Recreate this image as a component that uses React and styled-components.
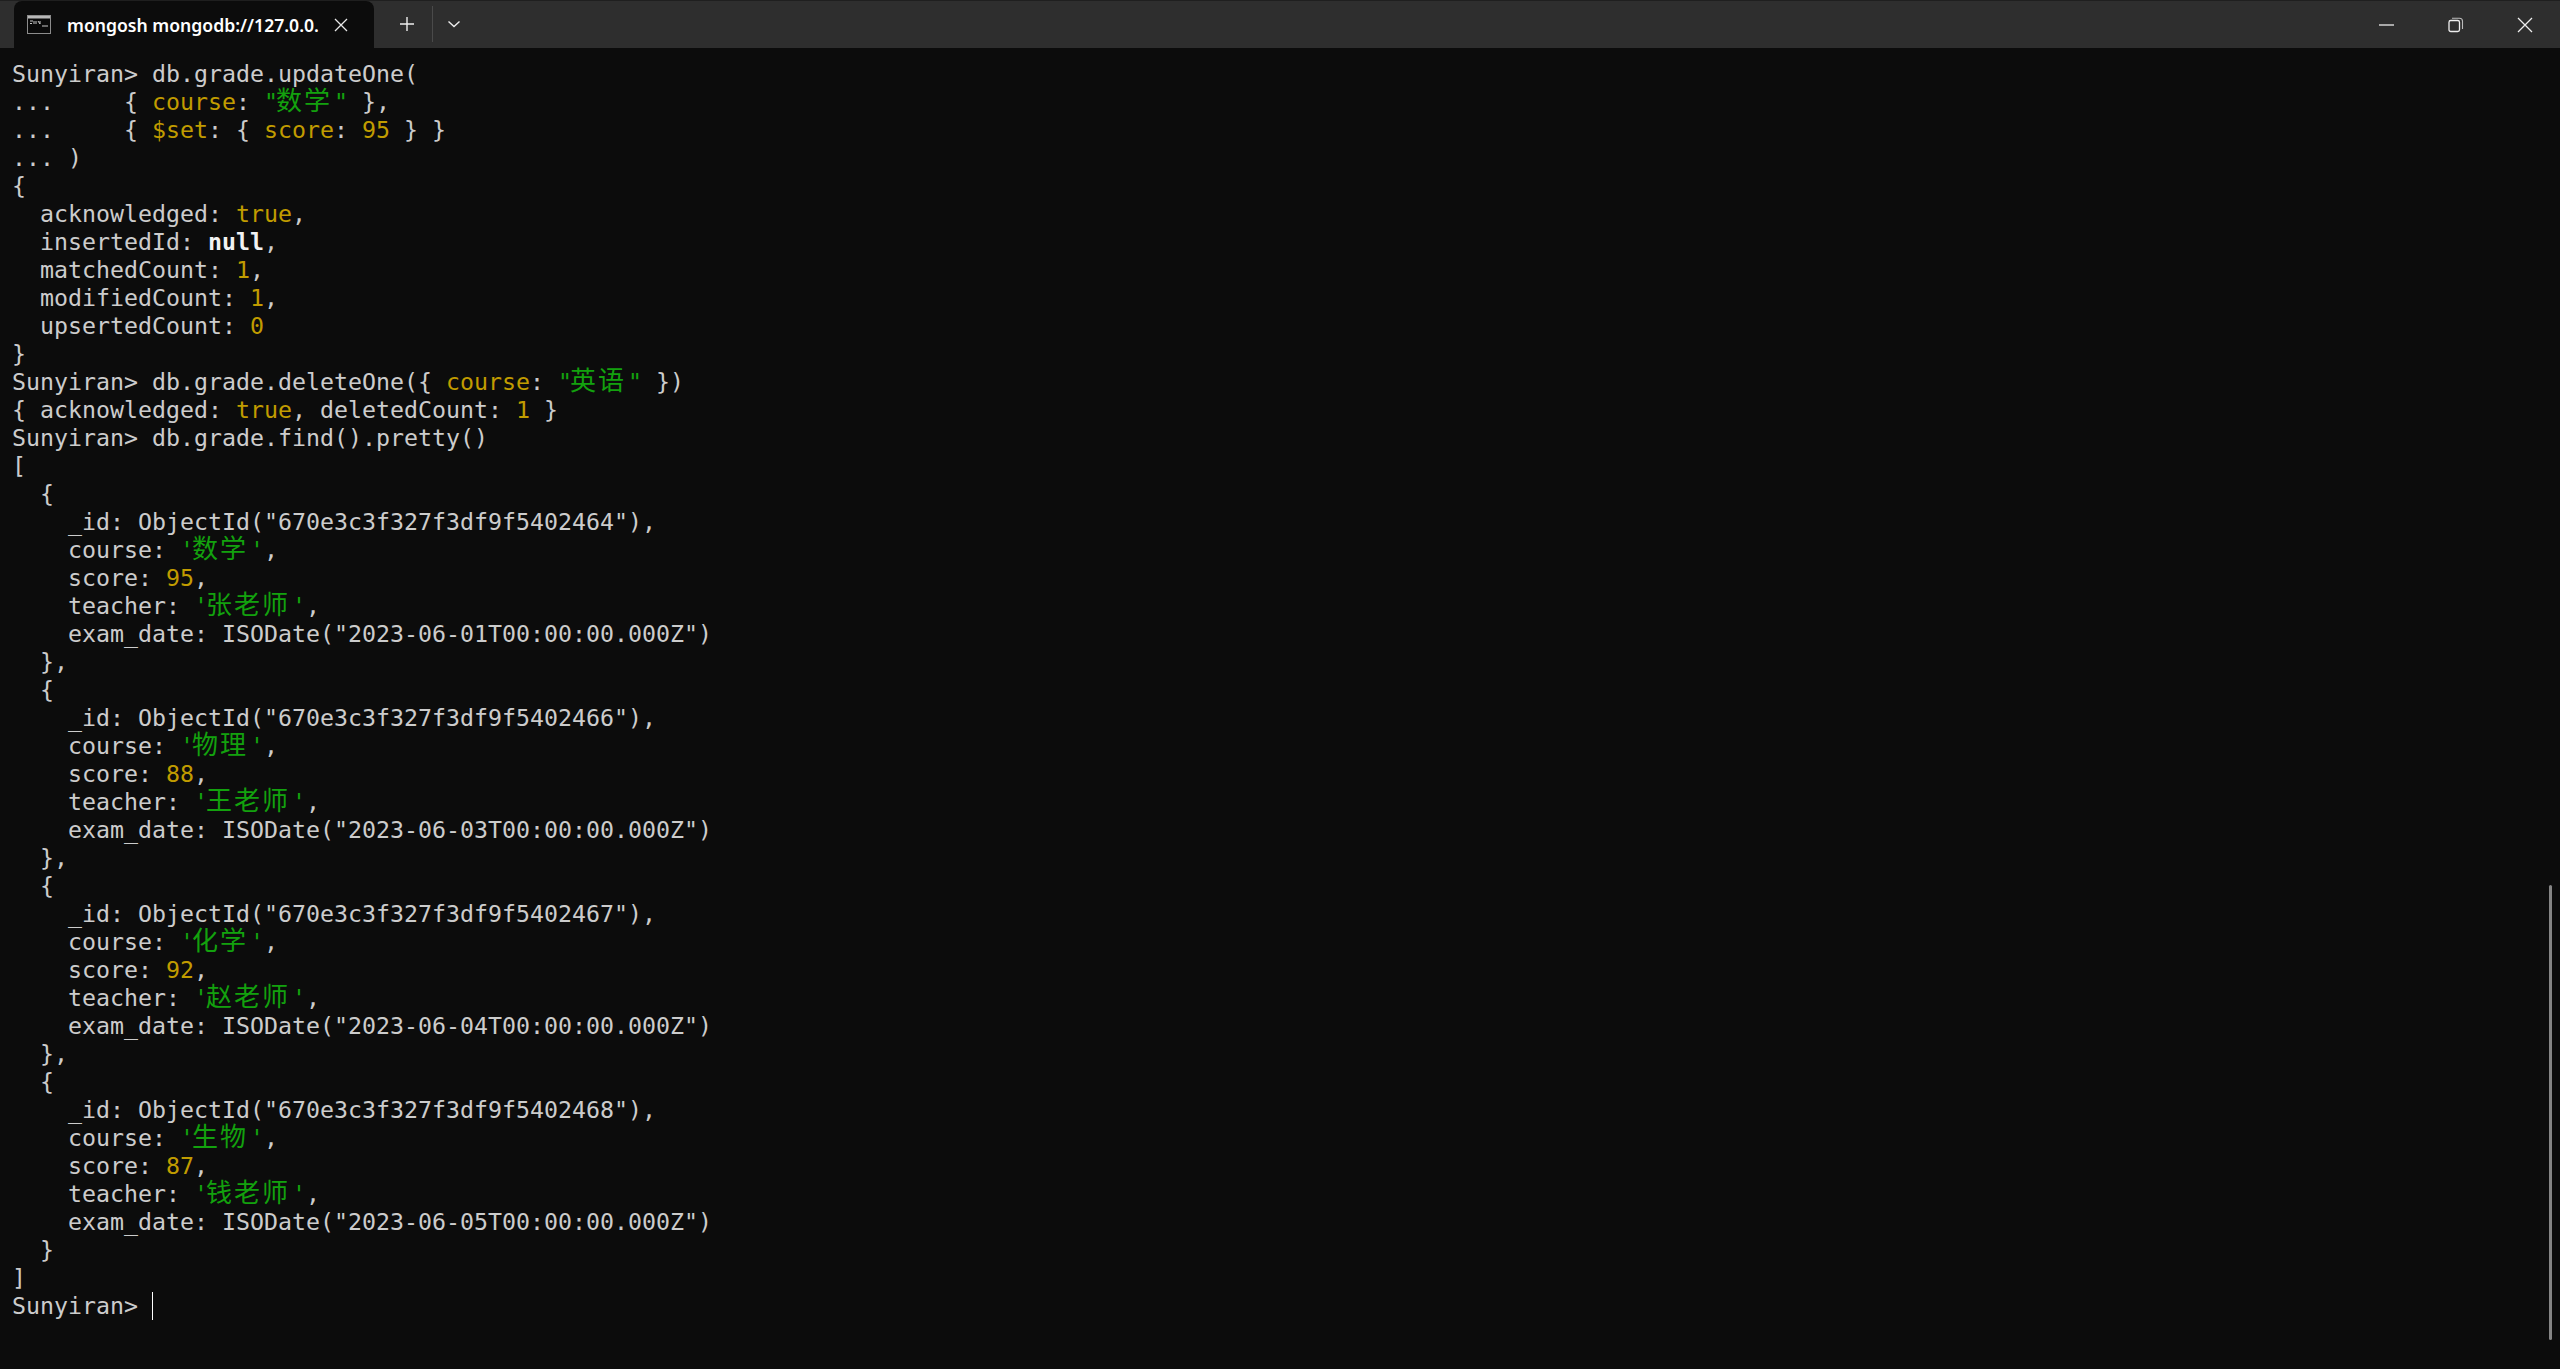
import React from "react";
import styled, { createGlobalStyle } from "styled-components";

const Global = createGlobalStyle`
  html, body { margin: 0; padding: 0; background: #0c0c0c; }
  #root { height: 100vh; }
`;

const Window = styled.div`
  position: relative;
  height: 1369px;
  background: #0c0c0c;
  display: flex;
  flex-direction: column;
  overflow: hidden;
`;

const TitleBar = styled.header`
  height: 48px;
  flex: none;
  background: #2e2e2e;
  border-top: 1px solid #1f1f1f;
  box-sizing: border-box;
  display: flex;
  align-items: flex-end;
  padding-left: 14px;
  color: #fff;
`;

const Tab = styled.div`
  width: 360px;
  height: 47px;
  background: #0c0c0c;
  border-radius: 8px 8px 0 0;
  box-sizing: border-box;
  padding: 0 0 0 13px;
  display: flex;
  align-items: center;
`;

const TabIcon = styled.svg`
  width: 24px;
  height: 20px;
  flex: none;
`;

const TabTitle = styled.span`
  font-family: "Noto Sans", "Open Sans", sans-serif;
  font-weight: 600;
  font-size: 17.6px;
  color: #fff;
  margin-left: 16px;
  width: 253px;
  white-space: nowrap;
`;

const TabClose = styled.svg`
  width: 14px;
  height: 14px;
  margin-left: 14px;
`;

const NewTab = styled.svg`
  width: 16px;
  height: 16px;
  margin: 0 0 16px 25px;
`;

const Divider = styled.div`
  width: 1px;
  height: 36px;
  margin: 0 0 6px 17px;
  background: #4a4a4a;
`;

const Chevron = styled.svg`
  width: 14px;
  height: 8px;
  margin: 0 0 20px 14px;
`;

const Spacer = styled.div`
  flex: 1;
`;

const Controls = styled.div`
  display: flex;
  align-items: center;
  height: 47px;
  margin-right: 27px;
  gap: 53px;
`;

const Control = styled.svg`
  width: 16px;
  height: 16px;
  display: block;
`;

const Screen = styled.main`
  flex: 1;
  padding: 12px 0 0 12px;
  font-family: "DejaVu Sans Mono", "Liberation Mono", monospace;
  font-size: 23.25px;
  line-height: 28px;
  color: #cccccc;
  white-space: pre;
`;

const Row = styled.div`
  height: 28px;
`;

const Y = styled.span`
  color: #c19c00;
`;

const G = styled.span`
  color: #13a10e;
`;

const B = styled.span`
  color: #f2f2f2;
  font-weight: 700;
`;

const Han = styled.span`
  display: inline-block;
  font-family: "Noto Sans CJK SC", sans-serif;
  font-size: 26px;
  letter-spacing: 2px;
  line-height: 20px;
  margin: 0 2px 0 -2px;
`;

const Cursor = styled.span`
  display: inline-block;
  width: 1px;
  height: 28px;
  background: #fff;
  vertical-align: top;
`;

const ScrollThumb = styled.div`
  position: absolute;
  left: 2549px;
  top: 885px;
  width: 3px;
  height: 455px;
  border-radius: 2px;
  background: #858585;
`;

const doc = (id, course, score, teacher, date, last) => (
  <React.Fragment key={id}>
    <Row>{"  {"}</Row>
    <Row>{`    _id: ObjectId("${id}"),`}</Row>
    <Row>{"    course: "}<G>'<Han>{course}</Han>'</G>,</Row>
    <Row>{"    score: "}<Y>{score}</Y>,</Row>
    <Row>{"    teacher: "}<G>'<Han>{teacher}</Han>'</G>,</Row>
    <Row>{`    exam_date: ISODate("${date}")`}</Row>
    <Row>{last ? "  }" : "  },"}</Row>
  </React.Fragment>
);

export default function App() {
  return (
    <Window>
      <Global />
      <TitleBar>
        <Tab>
          <TabIcon viewBox="0 0 24 20">
            <rect x="0.5" y="0.5" width="23" height="18" fill="#0a0a0a" stroke="#8c8c8c" />
            <rect x="1" y="1" width="22" height="2.5" fill="#b8b8b8" />
            <path d="M3 6h3M3 8.5h2M7 6v3M9 6v3M11 6l2 3v-3M15 11h6" stroke="#c8c8c8" strokeWidth="1" fill="none" />
          </TabIcon>
          <TabTitle>mongosh mongodb://127.0.0.</TabTitle>
          <TabClose viewBox="0 0 14 14">
            <path d="M1 1l12 12M13 1L1 13" stroke="#e8e8e8" strokeWidth="1.3" fill="none" />
          </TabClose>
        </Tab>
        <NewTab viewBox="0 0 16 16">
          <path d="M8 1v14M1 8h14" stroke="#eee" strokeWidth="1.4" fill="none" />
        </NewTab>
        <Divider />
        <Chevron viewBox="0 0 14 8">
          <path d="M1.5 1.5L7 6.5l5.5-5" stroke="#eee" strokeWidth="1.4" fill="none" />
        </Chevron>
        <Spacer />
        <Controls>
          <Control viewBox="0 0 16 16">
            <path d="M0 8h15" stroke="#ddd" strokeWidth="1.4" fill="none" />
          </Control>
          <Control viewBox="0 0 16 16">
            <rect x="1" y="3.5" width="10.5" height="11" rx="1.8" stroke="#eee" strokeWidth="1.3" fill="none" />
            <path d="M4 1.2h7.5a3 3 0 0 1 3 3V12" stroke="#bbb" strokeWidth="1.1" fill="none" />
          </Control>
          <Control viewBox="0 0 16 16">
            <path d="M1 1l14 14M15 1L1 15" stroke="#eee" strokeWidth="1.3" fill="none" />
          </Control>
        </Controls>
      </TitleBar>
      <Screen>
        <Row>Sunyiran&gt; db.grade.updateOne(</Row>
        <Row>{"...     { "}<Y>course</Y>: <G>"<Han>数学</Han>"</G>{" },"}</Row>
        <Row>{"...     { "}<Y>$set</Y>{": { "}<Y>score</Y>: <Y>95</Y>{" } }"}</Row>
        <Row>{"... )"}</Row>
        <Row>{"{"}</Row>
        <Row>{"  acknowledged: "}<Y>true</Y>,</Row>
        <Row>{"  insertedId: "}<B>null</B>,</Row>
        <Row>{"  matchedCount: "}<Y>1</Y>,</Row>
        <Row>{"  modifiedCount: "}<Y>1</Y>,</Row>
        <Row>{"  upsertedCount: "}<Y>0</Y></Row>
        <Row>{"}"}</Row>
        <Row>{"Sunyiran> db.grade.deleteOne({ "}<Y>course</Y>: <G>"<Han>英语</Han>"</G>{" })"}</Row>
        <Row>{"{ acknowledged: "}<Y>true</Y>, deletedCount: <Y>1</Y>{" }"}</Row>
        <Row>Sunyiran&gt; db.grade.find().pretty()</Row>
        <Row>[</Row>
        {doc("670e3c3f327f3df9f5402464", "数学", "95", "张老师", "2023-06-01T00:00:00.000Z")}
        {doc("670e3c3f327f3df9f5402466", "物理", "88", "王老师", "2023-06-03T00:00:00.000Z")}
        {doc("670e3c3f327f3df9f5402467", "化学", "92", "赵老师", "2023-06-04T00:00:00.000Z")}
        {doc("670e3c3f327f3df9f5402468", "生物", "87", "钱老师", "2023-06-05T00:00:00.000Z", true)}
        <Row>]</Row>
        <Row>{"Sunyiran> "}<Cursor /></Row>
      </Screen>
      <ScrollThumb />
    </Window>
  );
}
